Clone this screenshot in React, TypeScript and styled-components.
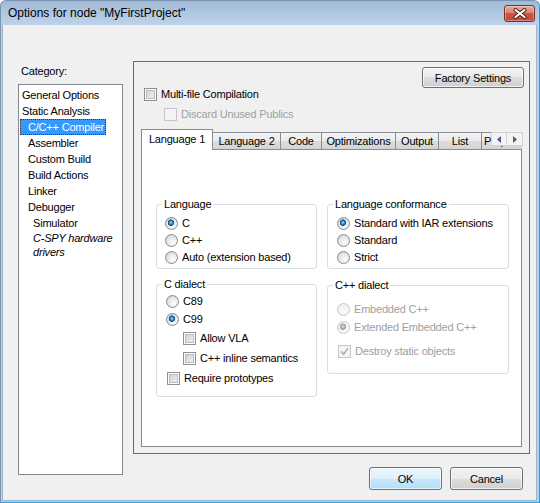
import React from 'react'
import styled, { createGlobalStyle } from 'styled-components'

const GlobalStyle = createGlobalStyle`
  html, body {
    margin: 0;
    padding: 0;
    background: #fff;
  }
  body {
    font-family: 'Liberation Sans', Arial, sans-serif;
    font-size: 11px;
    letter-spacing: -0.2px;
    color: #000;
  }
  * {
    box-sizing: border-box;
  }
`

const categories = [
  { label: 'General Options', level: 0 },
  { label: 'Static Analysis', level: 0 },
  { label: 'C/C++ Compiler', level: 1, selected: true },
  { label: 'Assembler', level: 1 },
  { label: 'Custom Build', level: 1 },
  { label: 'Build Actions', level: 1 },
  { label: 'Linker', level: 1 },
  { label: 'Debugger', level: 1 },
  { label: 'Simulator', level: 2 },
  { label: 'C-SPY hardware drivers', level: 2, italic: true }
]

const tabs = [
  { label: 'Language 1', width: 72, active: true },
  { label: 'Language 2', width: 68 },
  { label: 'Code', width: 41 },
  { label: 'Optimizations', width: 74 },
  { label: 'Output', width: 43 },
  { label: 'List', width: 43 },
  { label: 'Preprocessor', width: 68 }
]

const Window = styled.div`
  width: 540px;
  height: 503px;
  display: flex;
  flex-direction: column;
  background: linear-gradient(#a3bbd8, #bdd2ea 24px, #b9d0e9);
  border: 1px solid #7a93b0;
  border-right-color: #2f9fdc;
  border-bottom-color: #2f9fdc;
  border-radius: 6px 6px 0 0;
  overflow: hidden;
`

const TitleBar = styled.div`
  height: 24px;
  flex: none;
  display: flex;
  align-items: center;
  justify-content: space-between;
  padding: 0 4px 0 7px;
  font-size: 12px;
  letter-spacing: 0;
`

const CloseButton = styled.div`
  width: 31px;
  height: 17px;
  display: flex;
  align-items: center;
  justify-content: center;
  border: 1px solid #7a3026;
  border-radius: 3px;
  background: linear-gradient(#e9ab9e, #d98372 45%, #c95742 50%, #c44a35);
  box-shadow: inset 0 0 0 1px rgba(255, 255, 255, 0.35);
`

const Client = styled.div`
  flex: 1;
  margin: 0 2px 1px 1px;
  background: #f0f0f0;
  border: 1px solid #9fb4cb;
  border-top: 0;
`

const Layout = styled.div`
  display: grid;
  grid-template-columns: 105px 397px;
  grid-template-rows: 393px auto;
  column-gap: 10px;
  row-gap: 13px;
  padding: 36px 0 0 15px;
`

const Sidebar = styled.div`
  grid-row: 1 / 3;
  align-self: start;
  display: flex;
  flex-direction: column;
`

const SideLabel = styled.div`
  margin: 4px 0 0 3px;
  line-height: 13px;
`

const ListBox = styled.div`
  margin-top: 6px;
  height: 391px;
  border: 1px solid #828790;
  background: #fff;
  padding: 2px 4px 0 0;
  overflow: hidden;
`

const ListItem = styled.div<{ $level: number; $italic?: boolean }>`
  padding-left: ${(p) => [3, 9, 14][p.$level]}px;
  line-height: ${(p) => (p.$italic ? 14 : 16)}px;
  font-style: ${(p) => (p.$italic ? 'italic' : 'normal')};
`

const SelectedLabel = styled.span`
  display: inline-block;
  margin-left: -8px;
  padding: 0 2px 0 8px;
  background: #3399ff;
  color: #fff;
  outline: 1px dotted #3a3a3a;
  outline-offset: -1px;
`

const Panel = styled.div`
  border: 1px solid #6b6b6b;
  padding: 5px 5px 6px 7px;
  display: flex;
  flex-direction: column;
`

const Button = styled.button<{ $w: number; $h: number; $default?: boolean }>`
  width: ${(p) => p.$w}px;
  height: ${(p) => p.$h}px;
  flex: none;
  padding: 0;
  font-family: inherit;
  font-size: 11px;
  letter-spacing: inherit;
  color: #000;
  border: 1px solid ${(p) => (p.$default ? '#3c7fb1' : '#707070')};
  border-radius: 3px;
  background: ${(p) =>
    p.$default
      ? 'linear-gradient(#ebf6fd, #dcf1fc 50%, #c6e7fa 50%, #b4dff8)'
      : 'linear-gradient(#f2f2f2, #ebebeb 50%, #dddddd 50%, #cfcfcf)'};
  box-shadow: inset 0 0 0 1px rgba(255, 255, 255, 0.7);
`

const FactoryButton = styled(Button)`
  align-self: flex-end;
`

const Option = styled.div<{ $h?: number; $indent?: number; $mt?: number; $disabled?: boolean }>`
  display: flex;
  align-items: center;
  gap: 4px;
  height: ${(p) => p.$h ?? 17}px;
  margin-top: ${(p) => p.$mt ?? 0}px;
  padding-left: ${(p) => p.$indent ?? 0}px;
  line-height: 13px;
  white-space: nowrap;
  color: ${(p) => (p.$disabled ? '#a0a0a0' : '#000')};
`

const RadioMark = styled.span<{ $checked?: boolean; $disabled?: boolean }>`
  flex: none;
  width: 13px;
  height: 13px;
  border-radius: 50%;
  border: 1px solid ${(p) => (p.$disabled ? '#c8c8c8' : '#8a8a8a')};
  background: ${(p) => {
    const base = p.$disabled
      ? 'radial-gradient(circle at 60% 65%, #fafafa, #ececec)'
      : 'radial-gradient(circle at 62% 68%, #fdfdfd 0%, #e8e8e8 50%, #c6c6c6 100%)'
    if (!p.$checked) return base
    const dot = p.$disabled
      ? 'radial-gradient(circle at 45% 42%, #e6e6e6 0, #b2b2b2 1.8px, #9a9a9a 3px, transparent 3.4px)'
      : 'radial-gradient(circle at 45% 42%, #9fe6ff 0, #2d92d8 1.6px, #0e3f7c 3px, transparent 3.4px)'
    return `${dot}, ${base}`
  }};
`

const CheckMark = styled.span<{ $disabled?: boolean }>`
  flex: none;
  width: 13px;
  height: 13px;
  display: flex;
  align-items: center;
  justify-content: center;
  border: 1px solid ${(p) => (p.$disabled ? '#c5c5c5' : '#8e8f8f')};
  background: ${(p) => (p.$disabled ? '#f4f4f4' : 'linear-gradient(135deg, #c8ccd2, #f7f7f7)')};
  box-shadow: ${(p) => (p.$disabled ? 'none' : 'inset 0 0 0 1px #fff, inset 0 0 0 2px #b7bcc2')};
`

const TabHeader = styled.div`
  position: relative;
  margin: 8px 2px 0 0;
  z-index: 1;
`

const TabStrip = styled.div`
  height: 21px;
  display: flex;
  align-items: flex-end;
  overflow: hidden;
`

const Tab = styled.div<{ $w: number; $active?: boolean; $first?: boolean }>`
  flex: none;
  width: ${(p) => p.$w}px;
  height: ${(p) => (p.$active ? 21 : 18)}px;
  padding-top: ${(p) => (p.$active ? 3 : 2)}px;
  text-align: center;
  line-height: 13px;
  white-space: nowrap;
  overflow: hidden;
  border: 1px solid #898c95;
  border-left-width: ${(p) => (p.$first ? 1 : 0)}px;
  border-bottom-width: ${(p) => (p.$active ? 0 : 1)}px;
  background: ${(p) =>
    p.$active ? '#fff' : 'linear-gradient(#f3f3f3, #ebebeb 50%, #dddddd 50%, #d3d3d3)'};
`

const ScrollArrows = styled.div`
  position: absolute;
  top: 3px;
  right: -1px;
  display: flex;
`

const ArrowButton = styled.div`
  width: 16px;
  height: 14px;
  display: flex;
  align-items: center;
  justify-content: center;
  background: #f4f4f4;
  border: 1px solid #d2d2d2;
  & + & {
    border-left: 0;
  }
`

const Pane = styled.div`
  flex: 1;
  margin: -1px 2px 0 0;
  border: 1px solid #898c95;
  background: #fff;
`

const PaneGrid = styled.div`
  display: grid;
  grid-template-columns: 161px 182px;
  column-gap: 10px;
  row-gap: 9px;
  align-items: start;
  padding: 48px 0 0 14px;
`

const Group = styled.fieldset<{ $mt?: number }>`
  margin: ${(p) => p.$mt ?? 0}px 0 0;
  padding: 0;
  min-width: 0;
  border: 1px solid #d5dfe5;
  border-radius: 3px;
`

const Legend = styled.legend`
  margin-left: 5px;
  padding: 0 2px;
  line-height: 13px;
`

const GroupBody = styled.div<{ $pt: number; $pb: number; $pl: number }>`
  padding: ${(p) => `${p.$pt}px 0 ${p.$pb}px ${p.$pl}px`};
`

const Footer = styled.div`
  grid-column: 2;
  justify-self: end;
  display: flex;
  gap: 8px;
  margin-right: 7px;
`

const Check = ({ disabled, checked }: { disabled?: boolean; checked?: boolean }) => (
  <CheckMark $disabled={disabled}>
    {checked && (
      <svg width="9" height="9" viewBox="0 0 9 9">
        <path d="M1.2 4.6 L3.6 7.2 L7.9 1.4" fill="none" stroke="#a8a8a8" strokeWidth="1.5" />
      </svg>
    )}
  </CheckMark>
)

const Triangle = ({ dir }: { dir: 'left' | 'right' }) => (
  <svg width="4" height="7" viewBox="0 0 4 7">
    <path d={dir === 'left' ? 'M4 0 L0 3.5 L4 7 Z' : 'M0 0 L4 3.5 L0 7 Z'} fill="#4a5f82" />
  </svg>
)

const App = () => {
  return (
    <>
      <GlobalStyle />
      <Window>
        <TitleBar>
          <span>Options for node "MyFirstProject"</span>
          <CloseButton>
            <svg width="14" height="11" viewBox="0 0 14 11">
              <path d="M2.5 2 L11.5 9 M11.5 2 L2.5 9" stroke="#4a1a12" strokeWidth="4" strokeLinecap="round" />
              <path d="M2.5 2 L11.5 9 M11.5 2 L2.5 9" stroke="#fff" strokeWidth="2.2" strokeLinecap="round" />
            </svg>
          </CloseButton>
        </TitleBar>
        <Client>
          <Layout>
            <Sidebar>
              <SideLabel>Category:</SideLabel>
              <ListBox>
                {categories.map((c) => (
                  <ListItem key={c.label} $level={c.level} $italic={c.italic}>
                    {c.selected ? <SelectedLabel>{c.label}</SelectedLabel> : c.label}
                  </ListItem>
                ))}
              </ListBox>
            </Sidebar>

            <Panel>
              <FactoryButton $w={102} $h={21}>
                Factory Settings
              </FactoryButton>
              <Option $h={13} $indent={3}>
                <Check />
                Multi-file Compilation
              </Option>
              <Option $h={13} $indent={23} $mt={7} $disabled>
                <Check disabled />
                Discard Unused Publics
              </Option>

              <TabHeader>
                <TabStrip>
                  {tabs.map((t, i) => (
                    <Tab key={t.label} $w={t.width} $active={t.active} $first={i === 0}>
                      {t.label}
                    </Tab>
                  ))}
                </TabStrip>
                <ScrollArrows>
                  <ArrowButton>
                    <Triangle dir="left" />
                  </ArrowButton>
                  <ArrowButton>
                    <Triangle dir="right" />
                  </ArrowButton>
                </ScrollArrows>
              </TabHeader>

              <Pane>
                <PaneGrid>
                  <Group>
                    <Legend>Language</Legend>
                    <GroupBody $pt={4} $pb={2} $pl={8}>
                      <Option>
                        <RadioMark $checked />C
                      </Option>
                      <Option>
                        <RadioMark />
                        C++
                      </Option>
                      <Option>
                        <RadioMark />
                        Auto (extension based)
                      </Option>
                    </GroupBody>
                  </Group>

                  <Group>
                    <Legend>Language conformance</Legend>
                    <GroupBody $pt={4} $pb={2} $pl={9}>
                      <Option>
                        <RadioMark $checked />
                        Standard with IAR extensions
                      </Option>
                      <Option>
                        <RadioMark />
                        Standard
                      </Option>
                      <Option>
                        <RadioMark />
                        Strict
                      </Option>
                    </GroupBody>
                  </Group>

                  <Group>
                    <Legend>C dialect</Legend>
                    <GroupBody $pt={1} $pb={8} $pl={9}>
                      <Option $h={18}>
                        <RadioMark />
                        C89
                      </Option>
                      <Option $h={18}>
                        <RadioMark $checked />
                        C99
                      </Option>
                      <Option $h={20} $indent={17}>
                        <Check />
                        Allow VLA
                      </Option>
                      <Option $h={20} $indent={17}>
                        <Check />
                        C++ inline semantics
                      </Option>
                      <Option $h={20} $indent={1}>
                        <Check />
                        Require prototypes
                      </Option>
                    </GroupBody>
                  </Group>

                  <Group $mt={1}>
                    <Legend>C++ dialect</Legend>
                    <GroupBody $pt={8} $pb={12} $pl={9}>
                      <Option $h={18} $disabled>
                        <RadioMark $disabled />
                        Embedded C++
                      </Option>
                      <Option $h={18} $disabled>
                        <RadioMark $disabled $checked />
                        Extended Embedded C++
                      </Option>
                      <Option $h={20} $mt={5} $indent={1} $disabled>
                        <Check disabled checked />
                        Destroy static objects
                      </Option>
                    </GroupBody>
                  </Group>
                </PaneGrid>
              </Pane>
            </Panel>

            <Footer>
              <Button $w={73} $h={23} $default>
                OK
              </Button>
              <Button $w={73} $h={23}>
                Cancel
              </Button>
            </Footer>
          </Layout>
        </Client>
      </Window>
    </>
  )
}

export default App
